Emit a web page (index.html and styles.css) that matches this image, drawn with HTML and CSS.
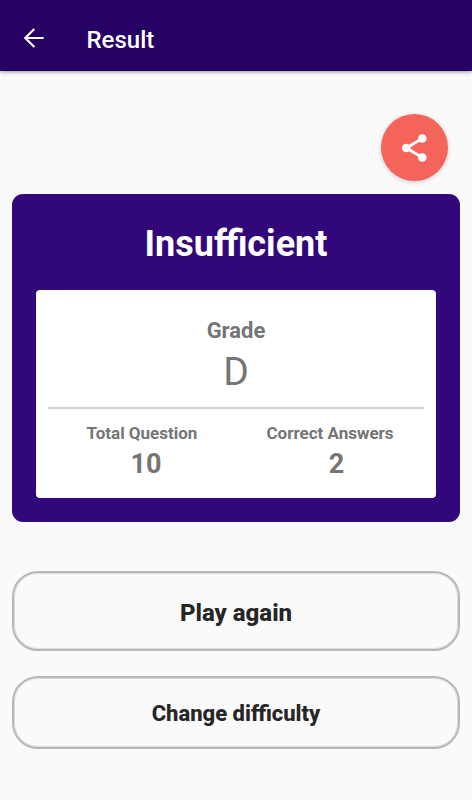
FILE: index.html
```html
<!DOCTYPE html>
<html lang="en">
<head>
<meta charset="utf-8">
<title>Result</title>
<link rel="stylesheet" href="styles.css">
</head>
<body>
<header class="appbar">
  <svg class="back" viewBox="0 0 28 28"><path d="M23.7 14H5.8M14.3 5L5.3 14l9 9"/></svg>
  <h1 class="appbar-title">Result</h1>
</header>
<main class="content">
  <button class="share" aria-label="Share">
    <svg viewBox="0 0 32 32"><path d="M23.3 6.5L7.3 16l16 9.5"/><circle cx="23.3" cy="6.5" r="4.3"/><circle cx="7.3" cy="16" r="4.3"/><circle cx="23.3" cy="25.5" r="4.3"/></svg>
  </button>
  <section class="card">
    <h2 class="verdict">Insufficient</h2>
    <div class="panel">
      <div class="label">Grade</div>
      <div class="grade">D</div>
      <div class="stats">
        <div class="stat"><div class="stat-label">Total Question</div><div class="stat-value total">10</div></div>
        <div class="stat"><div class="stat-label">Correct Answers</div><div class="stat-value correct">2</div></div>
      </div>
    </div>
  </section>
  <button class="action again">Play again</button>
  <button class="action change">Change difficulty</button>
</main>
</body>
</html>
```
FILE: styles.css
```css
* { box-sizing: border-box; }
body {
  margin: 0;
  height: 800px;
  overflow: hidden;
  background: #fafafa;
  font-family: Roboto, sans-serif;
  color: #757575;
}
.appbar {
  height: 71px;
  display: flex;
  align-items: center;
  padding: 8px 20px 0;
  background: #260062;
  color: #fff;
  box-shadow: 0 1px 4px rgba(0, 0, 0, .4);
}
.back { width: 28px; height: 28px; margin-top: -3px; fill: none; stroke: #fff; stroke-width: 2.2; }
.appbar-title { margin: 0 0 0 38.5px; font-size: 24px; line-height: 30px; font-weight: 500; }
.content { display: flex; flex-direction: column; padding: 43px 12px 0; }
.share {
  align-self: flex-end;
  width: 67px;
  height: 67px;
  margin-right: 12px;
  border: 0;
  border-radius: 50%;
  padding: 0;
  display: flex;
  align-items: center;
  justify-content: center;
  background: #f4645a;
  box-shadow: 0 1px 5px rgba(0, 0, 0, .2);
}
.share svg { width: 32px; height: 32px; fill: #fff; stroke: none; }
.share path { fill: none; stroke: #fff; stroke-width: 2.8; }
.card {
  height: 328.5px;
  margin-top: 12.5px;
  padding: 28.5px 24px 24px;
  border-radius: 11px;
  background: #31077a;
}
.verdict { margin: 0 0 24px; font-size: 36px; line-height: 44px; font-weight: 700; color: #fff; text-align: center; }
.panel { height: 208px; padding: 27px 12px 0; border-radius: 4px; background: #fff; text-align: center; }
.label { font-size: 22px; line-height: 28px; font-weight: 700; }
.grade { font-size: 39px; line-height: 54px; }
.stats { display: grid; grid-template-columns: 1fr 1fr; margin-top: 8px; padding-top: 14px; border-top: 2px solid #d0d0d0; }
.stat-label { font-size: 17px; line-height: 20px; font-weight: 700; }
.stat-value { margin-top: 4px; font-size: 27px; line-height: 34px; font-weight: 700; }
.total { padding-left: 8px; }
.correct { padding-left: 13px; }
.action {
  border: 2px solid #bab6b7;
  outline: 1px solid rgba(186, 182, 183, .45);
  outline-offset: -3px;
  padding: 2px 0 0;
  background: #fafafa;
  color: #262626;
  font-family: inherit;
  font-weight: 800;
}
.again { height: 80px; margin-top: 49px; padding-top: 4px; border-radius: 26px; font-size: 24px; }
.change { height: 73px; margin-top: 25px; border-radius: 26px; font-size: 22px; }
```
